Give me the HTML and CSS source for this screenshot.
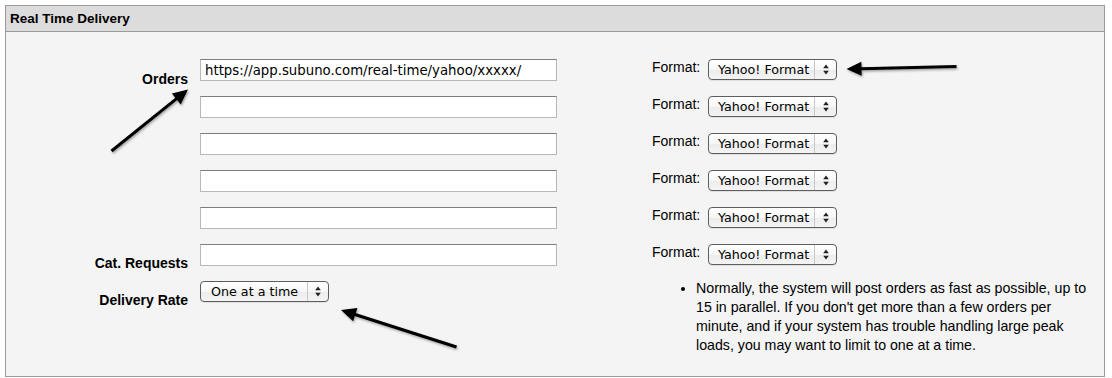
FILE: index.html
```html
<!DOCTYPE html>
<html>
<head>
<meta charset="utf-8">
<title>Real Time Delivery</title>
<link rel="stylesheet" href="styles.css">
</head>
<body>
<div class="panel">
  <div class="panel-head">Real Time Delivery</div>
  <div class="panel-body">
    <div class="form">
      <div class="lbl lbl-first">Orders</div>
      <div class="cell"><input class="txt" type="text" value="https://app.subuno.com/real-time/yahoo/xxxxx/"></div>
      <div class="fmt"><span class="fmt-label">Format:</span><div class="popup"><span class="popup-val">Yahoo! Format</span><span class="popup-arr"><svg width="6" height="11" viewBox="0 0 6 11"><path d="M3 0.5 L5.8 4.3 L0.2 4.3 Z M3 10.5 L5.8 6.7 L0.2 6.7 Z" fill="#222"/></svg></span></div></div>

      <div class="lbl"></div>
      <div class="cell"><input class="txt" type="text"></div>
      <div class="fmt"><span class="fmt-label">Format:</span><div class="popup"><span class="popup-val">Yahoo! Format</span><span class="popup-arr"><svg width="6" height="11" viewBox="0 0 6 11"><path d="M3 0.5 L5.8 4.3 L0.2 4.3 Z M3 10.5 L5.8 6.7 L0.2 6.7 Z" fill="#222"/></svg></span></div></div>

      <div class="lbl"></div>
      <div class="cell"><input class="txt" type="text"></div>
      <div class="fmt"><span class="fmt-label">Format:</span><div class="popup"><span class="popup-val">Yahoo! Format</span><span class="popup-arr"><svg width="6" height="11" viewBox="0 0 6 11"><path d="M3 0.5 L5.8 4.3 L0.2 4.3 Z M3 10.5 L5.8 6.7 L0.2 6.7 Z" fill="#222"/></svg></span></div></div>

      <div class="lbl"></div>
      <div class="cell"><input class="txt" type="text"></div>
      <div class="fmt"><span class="fmt-label">Format:</span><div class="popup"><span class="popup-val">Yahoo! Format</span><span class="popup-arr"><svg width="6" height="11" viewBox="0 0 6 11"><path d="M3 0.5 L5.8 4.3 L0.2 4.3 Z M3 10.5 L5.8 6.7 L0.2 6.7 Z" fill="#222"/></svg></span></div></div>

      <div class="lbl"></div>
      <div class="cell"><input class="txt" type="text"></div>
      <div class="fmt"><span class="fmt-label">Format:</span><div class="popup"><span class="popup-val">Yahoo! Format</span><span class="popup-arr"><svg width="6" height="11" viewBox="0 0 6 11"><path d="M3 0.5 L5.8 4.3 L0.2 4.3 Z M3 10.5 L5.8 6.7 L0.2 6.7 Z" fill="#222"/></svg></span></div></div>

      <div class="lbl">Cat. Requests</div>
      <div class="cell"><input class="txt" type="text"></div>
      <div class="fmt"><span class="fmt-label">Format:</span><div class="popup"><span class="popup-val">Yahoo! Format</span><span class="popup-arr"><svg width="6" height="11" viewBox="0 0 6 11"><path d="M3 0.5 L5.8 4.3 L0.2 4.3 Z M3 10.5 L5.8 6.7 L0.2 6.7 Z" fill="#222"/></svg></span></div></div>

      <div class="lbl">Delivery Rate</div>
      <div class="cell"><div class="popup"><span class="popup-val popup-val-rate">One at a time</span><span class="popup-arr"><svg width="6" height="11" viewBox="0 0 6 11"><path d="M3 0.5 L5.8 4.3 L0.2 4.3 Z M3 10.5 L5.8 6.7 L0.2 6.7 Z" fill="#222"/></svg></span></div></div>
      <div class="note">
        <ul class="note-list">
          <li>Normally, the system will post orders as fast as possible, up to 15 in parallel. If you don't get more than a few orders per minute, and if your system has trouble handling large peak loads, you may want to limit to one at a time.</li>
        </ul>
      </div>
    </div>
  </div>
</div>

<svg class="arrows" width="1112" height="378" viewBox="0 0 1112 378">
  <defs>
    <filter id="sh" x="-20%" y="-20%" width="140%" height="140%">
      <feDropShadow dx="1" dy="1.5" stdDeviation="1" flood-color="#000" flood-opacity="0.35"/>
    </filter>
  </defs>
  <g filter="url(#sh)" fill="#000" stroke="#000">
    <line x1="111.5" y1="151" x2="177.5" y2="97.9" stroke-width="3"/>
    <polygon points="188,89.5 180.7,104.4 171.9,93.4" stroke="none"/>
    <line x1="956.5" y1="66.5" x2="860.5" y2="68.7" stroke-width="3"/>
    <polygon points="846.5,69 861.7,75.7 861.3,61.7" stroke="none"/>
    <line x1="456.5" y1="347" x2="354.3" y2="314.3" stroke-width="3"/>
    <polygon points="341,310 357.4,307.9 353.1,321.3" stroke="none"/>
  </g>
</svg>
</body>
</html>
```
FILE: styles.css
```css
html, body {
  margin: 0;
  padding: 0;
  background: #ffffff;
}

body {
  position: relative;
  width: 1112px;
  height: 378px;
  overflow: hidden;
  font-family: "Liberation Sans", Arial, Helvetica, sans-serif;
  color: #000;
}

.panel {
  margin: 5px 0 0 5px;
  width: 1100px;
  height: 372px;
  box-sizing: border-box;
  border: 1px solid #9b9b9b;
  background: #f4f4f4;
  display: flex;
  flex-direction: column;
}

.panel-head {
  height: 25px;
  line-height: 25px;
  border-bottom: 1px solid #9b9b9b;
  background: #dcdcdc;
  padding-left: 4px;
  font-size: 13.5px;
  font-weight: bold;
}

.panel-body {
  flex: 1;
  padding-top: 27px;
}

.form {
  display: grid;
  grid-template-columns: 182px 357px 1fr;
  grid-template-rows: repeat(6, 37px) auto;
  column-gap: 12px;
}

.lbl {
  text-align: right;
  font-size: 14px;
  font-weight: bold;
  line-height: 16px;
  padding-top: 11px;
}

.lbl-first {
  padding-top: 12px;
}

.cell {
  display: flex;
  align-items: flex-start;
}

.txt {
  width: 357px;
  height: 22px;
  box-sizing: border-box;
  margin: 0;
  padding: 0 4px;
  border: 1px solid #b8b8b8;
  border-top-color: #7d7d7d;
  background: #fff;
  font-family: "DejaVu Sans", sans-serif;
  font-size: 13.3px;
  color: #000;
  outline: none;
}

.fmt {
  display: flex;
  align-items: flex-start;
  padding-left: 83px;
}

.fmt-label {
  width: 56px;
  font-size: 14px;
  line-height: 16px;
}

.popup {
  width: 129px;
  height: 21px;
  box-sizing: border-box;
  border: 1px solid #5e5e5e;
  border-radius: 4px;
  background: linear-gradient(#ffffff 0%, #f7f7f7 50%, #ececec 51%, #f4f4f4 100%);
  display: flex;
  align-items: stretch;
  box-shadow: 0 1px 0 rgba(0, 0, 0, 0.08);
}

.popup-val {
  width: 106px;
  padding-left: 9px;
  box-sizing: border-box;
  border-right: 1px solid #c8c8c8;
  font-family: "DejaVu Sans", sans-serif;
  font-size: 12.7px;
  line-height: 19px;
  white-space: nowrap;
}

.popup-val-rate {
  padding-left: 10px;
  width: 107px;
}

.popup-arr {
  flex: 1;
  display: flex;
  align-items: center;
  justify-content: center;
}

.popup-arr svg {
  display: block;
}

.note {
  padding-left: 83px;
}

.note-list {
  width: 398px;
  margin: -2px 0 0 0;
  padding: 0 0 0 44px;
  font-size: 14.2px;
  line-height: 19px;
}

.arrows {
  position: absolute;
  left: 0;
  top: 0;
  pointer-events: none;
}
```
